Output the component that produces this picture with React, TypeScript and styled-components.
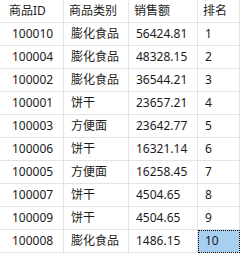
import React from "react";
import styled, { createGlobalStyle } from "styled-components";

const Global = createGlobalStyle`
  html, body { margin: 0; padding: 0; background: #ffffff; }
  body { font-family: "Noto Sans", "Noto Sans CJK SC", sans-serif; }
`;

const Grid = styled.div`
  display: grid;
  grid-template-columns: 64px 65px 69px 42px;
  grid-auto-rows: 23px;
  width: 240px;
`;

const Cell = styled.div<{ $header?: boolean; $first?: boolean; $selected?: boolean }>`
  box-sizing: border-box;
  border-right: 1px solid #e4e4e4;
  border-bottom: 1px solid #e4e4e4;
  display: flex;
  align-items: center;
  padding-left: ${(p) =>
    p.$header ? (p.$first ? 9 : 5) : p.$first ? 12 : 7}px;
  padding-bottom: 1px;
  font-family: "Noto Sans", "Noto Sans CJK SC", sans-serif;
  font-size: 12px;
  line-height: 1;
  color: #1b1b1b;
  white-space: nowrap;
  background: ${(p) => (p.$selected ? "#a7cff2" : "#ffffff")};
  outline: ${(p) => (p.$selected ? "1px dotted #000" : "none")};
  outline-offset: -1px;
`;

const headers = ["商品ID", "商品类别", "销售额", "排名"];
const rows: [string, string, string, string][] = [
  ["100010", "膨化食品", "56424.81", "1"],
  ["100004", "膨化食品", "48328.15", "2"],
  ["100002", "膨化食品", "36544.21", "3"],
  ["100001", "饼干", "23657.21", "4"],
  ["100003", "方便面", "23642.77", "5"],
  ["100006", "饼干", "16321.14", "6"],
  ["100005", "方便面", "16258.45", "7"],
  ["100007", "饼干", "4504.65", "8"],
  ["100009", "饼干", "4504.65", "9"],
  ["100008", "膨化食品", "1486.15", "10"],
];

export default function App() {
  return (
    <>
      <Global />
      <Grid>
        {headers.map((h, i) => (
          <Cell key={h} $header $first={i === 0}>
            {h}
          </Cell>
        ))}
        {rows.map((r, ri) =>
          r.map((v, ci) => (
            <Cell
              key={`${ri}-${ci}`}
              $first={ci === 0}
              $selected={ri === rows.length - 1 && ci === 3}
            >
              {v}
            </Cell>
          ))
        )}
      </Grid>
    </>
  );
}
